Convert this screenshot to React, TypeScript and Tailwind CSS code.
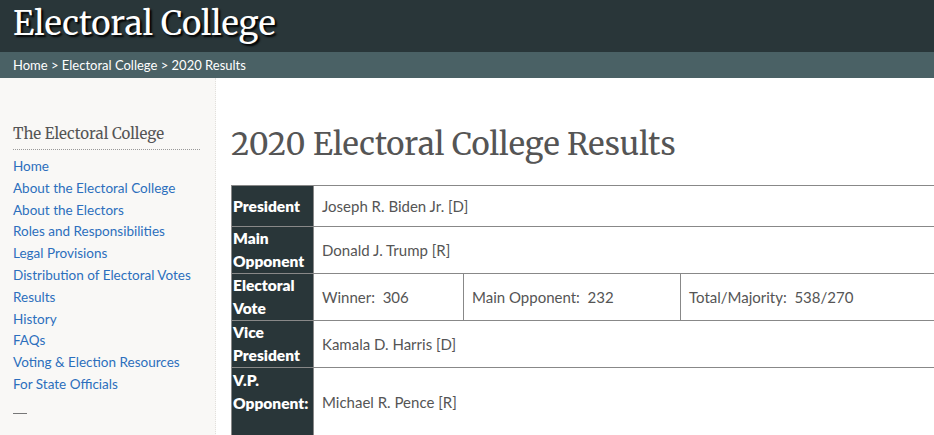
import React from 'react'

const links = [
  'Home',
  'About the Electoral College',
  'About the Electors',
  'Roles and Responsibilities',
  'Legal Provisions',
  'Distribution of Electoral Votes',
  'Results',
  'History',
  'FAQs',
  'Voting & Election Resources',
  'For State Officials',
]

const sans = "font-['Source_Sans_Pro','Lato',sans-serif]"
const serif = "font-['Merriweather','DejaVu_Serif',serif]"

export default function App() {
  return (
    <div className={`h-[435px] w-[934px] overflow-hidden bg-white ${sans}`}>
      {/* Header */}
      <div className="h-[52px] bg-[#293639] px-[13px]">
        <h1
          className={`${serif} text-[33px] leading-[48px] text-white [text-shadow:2px_2px_2px_#000]`}
        >
          Electoral College
        </h1>
      </div>
      <div className="h-[26px] bg-[#4a6165] px-[13px] text-[13px] leading-[27px] text-white">
        Home &gt; Electoral College &gt; 2020 Results
      </div>

      <div className="flex">
        {/* Sidebar */}
        <aside className="h-[400px] w-[216px] shrink-0 border-r border-dotted border-[#e2e0dc] bg-[#f9f8f6] px-[13px] pt-[44px]">
          <h2
            className={`${serif} w-[187px] border-b border-dotted border-[#999] pb-[3px] text-[15px] leading-[24px] text-[#555]`}
          >
            The Electoral College
          </h2>
          <ul className="mt-[6px] text-[13.5px] leading-[21.8px] text-[#2c6fbd]">
            {links.map((l) => (
              <li key={l}>{l}</li>
            ))}
          </ul>
          <div className="mt-[9px] h-[22px] text-[14px] leading-[22px] text-[#555]">
            <span className="inline-block h-[1px] w-[14px] translate-y-[-4px] bg-[#777] align-middle" />
          </div>
          <div className="mt-[3px] text-[13.5px] leading-[22px] text-[#2c6fbd]">Contact OFR</div>
        </aside>

        {/* Main */}
        <main className="flex-1 pl-[15px]">
          <h2 className={`${serif} mt-[44px] text-[31px] leading-[44px] text-[#555]`}>
            2020 Electoral College Results
          </h2>
          <table className="mt-[19px] w-[760px] border-collapse text-[15px] leading-[23px]">
            <tbody>
              <tr className="h-[41px]">
                <th className="w-[82px] border border-[#888] bg-[#293639] pl-[1px] text-left text-[15.5px] font-extrabold text-white">
                  President
                </th>
                <td colSpan={3} className="border border-[#888] px-[8px] text-[#555]">
                  Joseph R. Biden Jr. [D]
                </td>
              </tr>
              <tr className="h-[46px]">
                <th className="border border-[#888] bg-[#293639] pl-[1px] text-left text-[15.5px] font-extrabold text-white">
                  Main
                  <br />
                  Opponent
                </th>
                <td colSpan={3} className="border border-[#888] px-[8px] text-[#555]">
                  Donald J. Trump [R]
                </td>
              </tr>
              <tr className="h-[46px]">
                <th className="border border-[#888] bg-[#293639] pl-[1px] text-left text-[15.5px] font-extrabold text-white">
                  Electoral
                  <br />
                  Vote
                </th>
                <td className="w-[150px] border border-[#888] px-[8px] text-[#555]">
                  Winner:&nbsp; 306
                </td>
                <td className="w-[217px] border border-[#888] px-[8px] text-[#555]">
                  Main Opponent:&nbsp; 232
                </td>
                <td className="border border-[#888] px-[8px] text-[#555]">
                  Total/Majority:&nbsp; 538/270
                </td>
              </tr>
              <tr className="h-[47px]">
                <th className="border border-[#888] bg-[#293639] pl-[1px] text-left text-[15.5px] font-extrabold text-white">
                  Vice
                  <br />
                  President
                </th>
                <td colSpan={3} className="border border-[#888] px-[8px] text-[#555]">
                  Kamala D. Harris [D]
                </td>
              </tr>
              <tr className="h-[70px]">
                <th className="border border-[#888] bg-[#293639] pl-[1px] pt-[1px] text-left align-top text-[15.5px] font-extrabold text-white">
                  V.P.
                  <br />
                  Opponent:
                </th>
                <td colSpan={3} className="border border-[#888] px-[8px] text-[#555]">
                  Michael R. Pence [R]
                </td>
              </tr>
            </tbody>
          </table>
        </main>
      </div>
    </div>
  )
}
